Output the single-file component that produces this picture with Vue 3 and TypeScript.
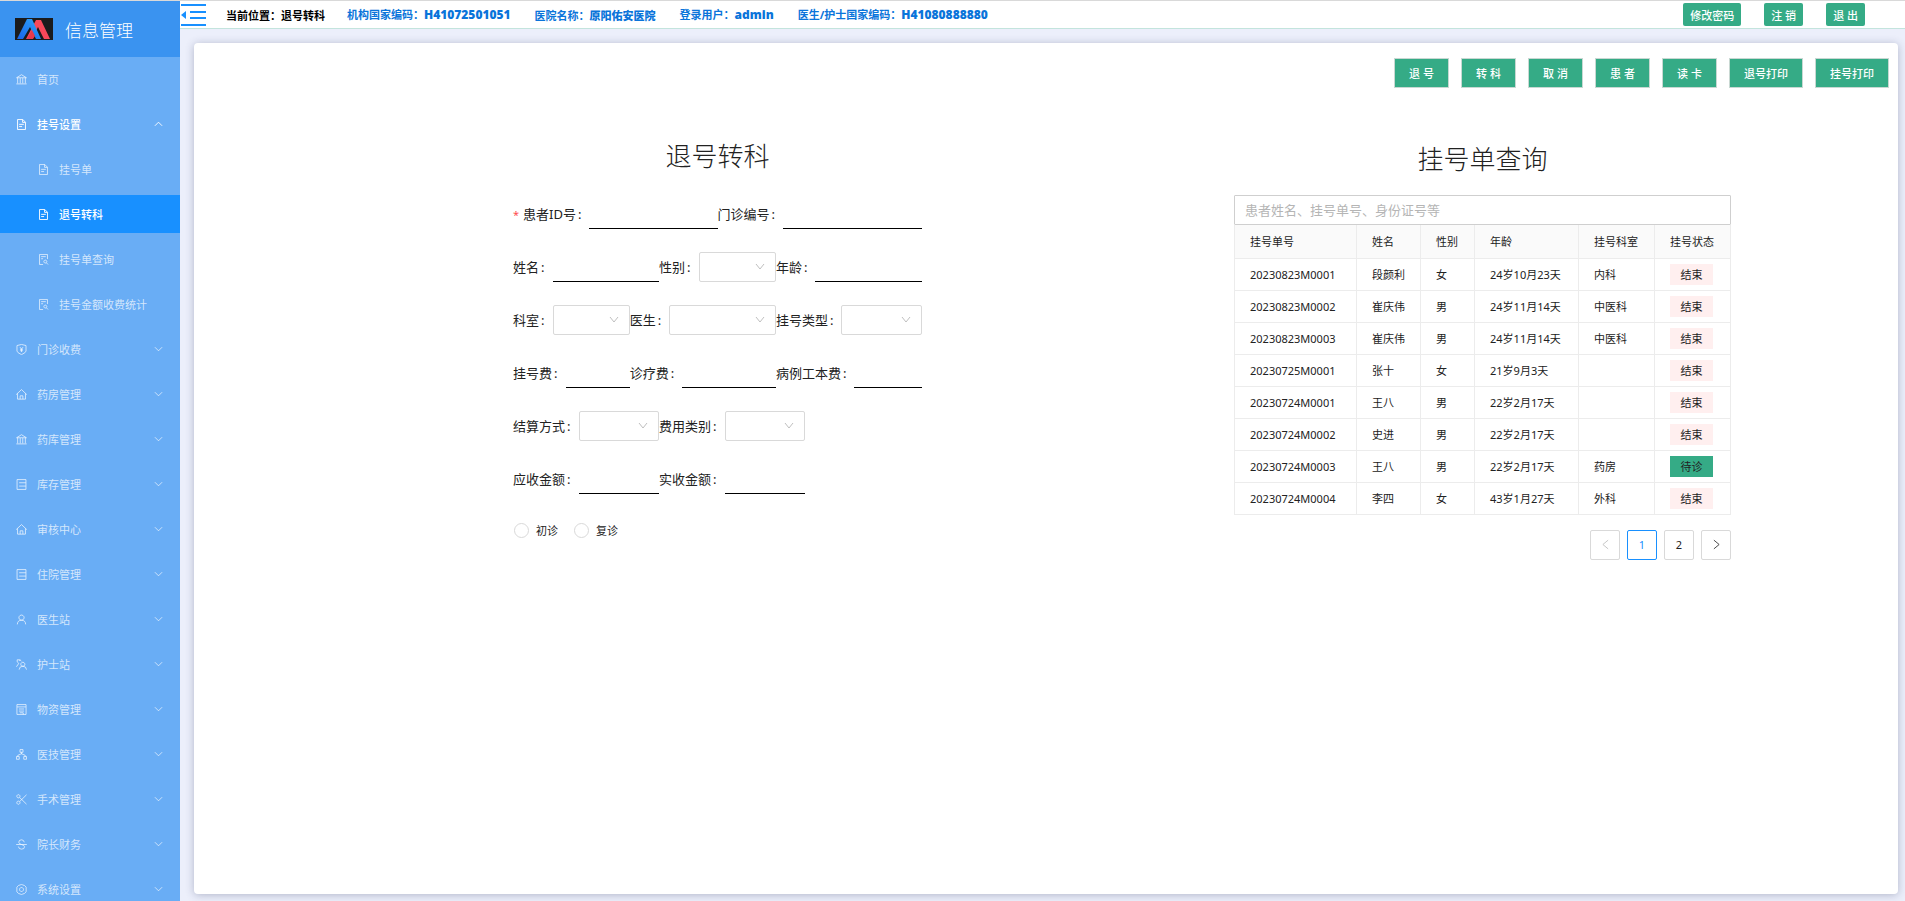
<script setup lang="ts">
import { ref } from 'vue'

interface MenuItem {
  label: string
  icon: string
  kind: 'link' | 'group'
  open?: boolean
  active?: boolean
  sub?: boolean
}

interface Field {
  id: string
  label: string
  span: number
  type: 'input' | 'select'
  required?: boolean
}

interface Registration {
  no: string
  name: string
  sex: string
  age: string
  dept: string
  status: string
}

const icons: Record<string, string> = {
  bank: 'M110 370L512 120L914 370ZM200 380V820M410 400V820M614 400V820M824 380V820M90 870H934',
  file: 'M190 100H610L834 324V924H190ZM600 110V340H824M320 500H700M320 680H560',
  search: 'M834 480V100H190V924H480M320 280H700M320 450H480M660 560a120 120 0 1 0 1 0ZM750 780L880 920',
  shield: 'M512 100L880 190V640Q880 760 512 930Q144 760 144 640V190ZM390 320L512 480L634 320M512 480V720M400 500H624M400 610H624',
  home: 'M80 520L512 110L944 520M190 430V890H834V430M400 890V620H624V890',
  book: 'M150 110H874V914H150ZM320 370H864M320 640H864',
  user: 'M512 150a210 210 0 1 0 1 0ZM172 910Q190 570 512 570Q834 570 852 910',
  nurse: 'M620 330a165 165 0 1 0 1 0ZM320 930Q340 650 620 650Q900 650 920 930M420 130H160V300L290 420L100 700M500 250Q440 120 330 190',
  store: 'M140 110H884V914H140ZM150 300H874M300 470H724M300 640H724M370 780H654V914',
  cluster: 'M390 110H634V330H390ZM100 680H330V900H100ZM694 680H924V900H694ZM512 330V480M210 680V580L512 450L814 580V680',
  scissors: 'M260 120a130 130 0 1 0 1 0ZM260 640a130 130 0 1 0 1 0ZM360 350L920 890M360 680L920 130',
  strike: 'M80 512H944M740 330Q700 130 512 130Q290 130 290 330Q290 450 512 512Q760 570 760 700Q760 890 512 890Q290 890 260 680',
  setting: 'M512 100L620 140L760 190L890 320V700L760 830L620 880L512 924L400 880L260 830L134 700V320L260 190L400 140ZM512 350a162 162 0 1 0 1 0Z'
}

const menu: MenuItem[] = [
  { label: '首页', icon: 'bank', kind: 'link' },
  { label: '挂号设置', icon: 'file', kind: 'group', open: true },
  { label: '挂号单', icon: 'file', kind: 'link', sub: true },
  { label: '退号转科', icon: 'file', kind: 'link', sub: true, active: true },
  { label: '挂号单查询', icon: 'search', kind: 'link', sub: true },
  { label: '挂号金额收费统计', icon: 'search', kind: 'link', sub: true },
  { label: '门诊收费', icon: 'shield', kind: 'group' },
  { label: '药房管理', icon: 'home', kind: 'group' },
  { label: '药库管理', icon: 'bank', kind: 'group' },
  { label: '库存管理', icon: 'book', kind: 'group' },
  { label: '审核中心', icon: 'home', kind: 'group' },
  { label: '住院管理', icon: 'book', kind: 'group' },
  { label: '医生站', icon: 'user', kind: 'group' },
  { label: '护士站', icon: 'nurse', kind: 'group' },
  { label: '物资管理', icon: 'store', kind: 'group' },
  { label: '医技管理', icon: 'cluster', kind: 'group' },
  { label: '手术管理', icon: 'scissors', kind: 'group' },
  { label: '院长财务', icon: 'strike', kind: 'group' },
  { label: '系统设置', icon: 'setting', kind: 'group' }
]

const info = [
  { label: '机构国家编码：', value: 'H41072501051', latin: true },
  { label: '医院名称：', value: '原阳佑安医院', latin: false },
  { label: '登录用户：', value: 'admin', latin: true },
  { label: '医生/护士国家编码：', value: 'H41080888880', latin: true }
]

const session = ['修改密码', '注 销', '退 出']
const actions = ['退 号', '转 科', '取 消', '患 者', '读 卡', '退号打印', '挂号打印']

const rows: Field[][] = [
  [
    { id: 'patient', label: '患者ID号', span: 7, type: 'input', required: true },
    { id: 'clinic', label: '门诊编号', span: 7, type: 'input' }
  ],
  [
    { id: 'name', label: '姓名', span: 5, type: 'input' },
    { id: 'sex', label: '性别', span: 4, type: 'select' },
    { id: 'age', label: '年龄', span: 5, type: 'input' }
  ],
  [
    { id: 'dept', label: '科室', span: 4, type: 'select' },
    { id: 'doctor', label: '医生', span: 5, type: 'select' },
    { id: 'kind', label: '挂号类型', span: 5, type: 'select' }
  ],
  [
    { id: 'fee', label: '挂号费', span: 4, type: 'input' },
    { id: 'treat', label: '诊疗费', span: 5, type: 'input' },
    { id: 'record', label: '病例工本费', span: 5, type: 'input' }
  ],
  [
    { id: 'settle', label: '结算方式', span: 5, type: 'select' },
    { id: 'cost', label: '费用类别', span: 5, type: 'select' }
  ],
  [
    { id: 'due', label: '应收金额', span: 5, type: 'input' },
    { id: 'paid', label: '实收金额', span: 5, type: 'input' }
  ]
]

const columns = ['挂号单号', '姓名', '性别', '年龄', '挂号科室', '挂号状态']

const records: Registration[] = [
  { no: '20230823M0001', name: '段颜利', sex: '女', age: '24岁10月23天', dept: '内科', status: '结束' },
  { no: '20230823M0002', name: '崔庆伟', sex: '男', age: '24岁11月14天', dept: '中医科', status: '结束' },
  { no: '20230823M0003', name: '崔庆伟', sex: '男', age: '24岁11月14天', dept: '中医科', status: '结束' },
  { no: '20230725M0001', name: '张十', sex: '女', age: '21岁9月3天', dept: '', status: '结束' },
  { no: '20230724M0001', name: '王八', sex: '男', age: '22岁2月17天', dept: '', status: '结束' },
  { no: '20230724M0002', name: '史进', sex: '男', age: '22岁2月17天', dept: '', status: '结束' },
  { no: '20230724M0003', name: '王八', sex: '男', age: '22岁2月17天', dept: '药房', status: '待诊' },
  { no: '20230724M0004', name: '李四', sex: '女', age: '43岁1月27天', dept: '外科', status: '结束' }
]

const keyword = ref('')
const visit = ref('')
const page = ref(1)
</script>

<template>
  <div class="app">
    <aside class="sidebar">
      <div class="brand">
        <svg class="logo" viewBox="0 0 38 22" aria-hidden="true">
          <defs>
            <linearGradient id="logo-blue" x1="0" y1="1" x2="1" y2="0">
              <stop offset="0" stop-color="#1763e8" />
              <stop offset="1" stop-color="#2fa6fb" />
            </linearGradient>
          </defs>
          <rect width="38" height="22" fill="#1b1b1c" />
          <path d="M21 2h5l9 19h-6L23 9l-6 12h-6z" fill="#f8485a" />
          <path d="M12 1h5l9 20h-5L15 9 8 21H2z" fill="url(#logo-blue)" />
          <path d="M17 12l3 6-2 3h-6z" fill="#e83a4c" />
        </svg>
        <span>信息管理</span>
      </div>
      <nav class="menu">
        <component
          :is="item.kind === 'link' ? 'a' : 'button'"
          v-for="item in menu"
          :key="item.label"
          :href="item.kind === 'link' ? '#' : undefined"
          :type="item.kind === 'group' ? 'button' : undefined"
          class="item"
          :class="{ sub: item.sub, active: item.active, open: item.open }"
        >
          <svg class="glyph" viewBox="64 64 896 896" aria-hidden="true"><path :d="icons[item.icon]" /></svg>
          <span class="text">{{ item.label }}</span>
          <svg v-if="item.kind === 'group'" class="arrow" viewBox="0 0 10 6" aria-hidden="true">
            <path :d="item.open ? 'M1 5l4-4 4 4' : 'M1 1l4 4 4-4'" />
          </svg>
        </component>
      </nav>
    </aside>

    <div class="main">
      <header class="topbar">
        <button type="button" class="fold" aria-label="收起菜单">
          <svg viewBox="0 0 26 24" aria-hidden="true">
            <path d="M1 2h25M10 9h16M10 15h16M1 22h25" stroke="#1890ff" stroke-width="2" />
            <path d="M1 12l5-4v8z" fill="#1890ff" />
          </svg>
        </button>
        <span class="place">当前位置：退号转科</span>
        <div class="info">
          <span v-for="i in info" :key="i.label">{{ i.label }}<b :class="{ latin: i.latin }">{{ i.value }}</b></span>
        </div>
        <div class="session">
          <button v-for="s in session" :key="s" type="button">{{ s }}</button>
        </div>
      </header>

      <main class="card">
        <div class="actions">
          <button v-for="a in actions" :key="a" type="button">{{ a }}</button>
        </div>

        <div class="panels">
          <form class="form" @submit.prevent>
            <h2>退号转科</h2>
            <div v-for="(row, r) in rows" :key="r" class="row">
              <div v-for="f in row" :key="f.id" class="field" :class="'span-' + f.span">
                <label :for="f.id"><i v-if="f.required">*</i>{{ f.label }}<span>:</span></label>
                <input v-if="f.type === 'input'" :id="f.id" type="text" />
                <div v-else class="select">
                  <select :id="f.id"></select>
                  <svg viewBox="0 0 12 8" aria-hidden="true"><path d="M2 1l4 5 4-5" /></svg>
                </div>
              </div>
            </div>
            <div class="visits">
              <label><input v-model="visit" type="radio" name="visit" value="first" />初诊</label>
              <label><input v-model="visit" type="radio" name="visit" value="again" />复诊</label>
            </div>
          </form>

          <section class="query">
            <h2>挂号单查询</h2>
            <input v-model="keyword" class="search" type="text" aria-label="查询" placeholder="患者姓名、挂号单号、身份证号等" />
            <table>
              <thead>
                <tr>
                  <th v-for="(c, n) in columns" :key="c" :class="'col-' + n">{{ c }}</th>
                </tr>
              </thead>
              <tbody>
                <tr v-for="r in records" :key="r.no">
                  <td>{{ r.no }}</td>
                  <td>{{ r.name }}</td>
                  <td>{{ r.sex }}</td>
                  <td>{{ r.age }}</td>
                  <td>{{ r.dept }}</td>
                  <td><span class="tag" :class="{ waiting: r.status === '待诊' }">{{ r.status }}</span></td>
                </tr>
              </tbody>
            </table>
            <div class="pager">
              <button type="button" class="prev" aria-label="上一页" :disabled="page === 1">
                <svg viewBox="0 0 8 12" aria-hidden="true"><path d="M7 1L1 6l6 5" /></svg>
              </button>
              <button v-for="p in 2" :key="p" type="button" :class="{ current: p === page }" @click="page = p">{{ p }}</button>
              <button type="button" aria-label="下一页" @click="page = 2">
                <svg viewBox="0 0 8 12" aria-hidden="true"><path d="M1 1l6 5-6 5" /></svg>
              </button>
            </div>
          </section>
        </div>
      </main>
    </div>
  </div>
</template>

<style>
body {
  margin: 0;
}
</style>

<style scoped>
.app {
  display: flex;
  box-sizing: border-box;
  height: 100vh;
  overflow: hidden;
  border-top: 1px solid #d9d9d9;
  background: #eceffb;
  color: #222;
  font-family: "Noto Sans", "Noto Sans CJK SC", sans-serif;
  font-size: 11px;
}

.app * {
  box-sizing: border-box;
}

button,
input,
select {
  margin: 0;
  padding: 0;
  border: 0;
  outline: 0;
  background: none;
  color: inherit;
  font: inherit;
}

button {
  cursor: pointer;
}

.sidebar {
  flex: none;
  width: 180px;
  background: #69adf5;
  color: #fff;
}

.brand {
  display: flex;
  align-items: center;
  gap: 12px;
  height: 56px;
  padding-left: 15px;
  background: #3a93f0;
  font-size: 17px;
  font-weight: 300;
}

.logo {
  width: 38px;
  height: 22px;
}

.menu {
  display: flex;
  flex-direction: column;
  gap: 7px;
  padding-top: 3px;
}

.item {
  display: flex;
  align-items: center;
  gap: 10px;
  height: 38px;
  padding: 0 17px 0 16px;
  color: rgba(255, 255, 255, 0.72);
  text-align: left;
  text-decoration: none;
}

.item.sub {
  padding-left: 38px;
}

.item.open,
.item.active {
  color: #fff;
  font-weight: 500;
}

.item.active {
  background: #1890ff;
}

.text {
  flex: 1;
}

.glyph {
  flex: none;
  width: 11px;
  height: 11px;
  fill: none;
  stroke: currentColor;
  stroke-width: 76;
}

.arrow {
  flex: none;
  width: 9px;
  height: 6px;
  fill: none;
  stroke: currentColor;
  stroke-width: 1;
}

.main {
  display: flex;
  flex: 1;
  flex-direction: column;
  min-width: 0;
}

.topbar {
  display: flex;
  align-items: center;
  height: 28px;
  padding-right: 40px;
  border-bottom: 1px solid #c3e4dd;
  background: #fff;
  font-weight: 700;
}

.fold {
  width: 26px;
  height: 24px;
}

.fold svg {
  display: block;
  width: 26px;
  height: 24px;
  fill: none;
}

.place {
  margin: 0 22px 0 20px;
  color: #000;
}

.info {
  display: flex;
  flex: 1;
  align-items: center;
  gap: 24px;
  color: #0a74da;
}

.info .latin {
  font-size: 12px;
}

.session {
  display: flex;
  gap: 23px;
}

.session button {
  height: 23px;
  padding: 0 7px;
  border-radius: 2px;
  background: #35ab86;
  color: #fff;
  font-weight: 500;
}

.card {
  flex: 1;
  margin: 14px 7px 7px 14px;
  padding: 15px 9px;
  border-radius: 4px;
  background: #fff;
  box-shadow: 0 1px 9px rgba(40, 50, 90, 0.3);
}

.actions {
  display: flex;
  justify-content: flex-end;
  gap: 12px;
}

.actions button {
  min-width: 55px;
  height: 30px;
  padding: 0 14px;
  border: 1px solid #c8d8d2;
  background: #35ab86;
  color: #fff;
  font-weight: 500;
}

.panels {
  display: grid;
  grid-template-columns: 310fr 409fr 312fr 497fr 158fr;
  align-items: start;
}

h2 {
  margin: 0;
  font-size: 26px;
  font-weight: 300;
  line-height: 40px;
  text-align: center;
}

.form {
  display: flex;
  grid-column: 2;
  flex-direction: column;
  gap: 23px;
  padding-top: 48px;
  font-size: 13px;
}

.row {
  display: grid;
  grid-template-columns: repeat(14, minmax(0, 1fr));
}

.field {
  display: flex;
  align-items: center;
  height: 30px;
}

.span-4 {
  grid-column: span 4;
}

.span-5 {
  grid-column: span 5;
}

.span-7 {
  grid-column: span 7;
}

.field label {
  flex: none;
  margin-right: 8px;
  padding-bottom: 2px;
}

.field label span {
  margin-left: 2px;
}

.field i {
  margin-right: 4px;
  color: #ff4d4f;
  font-size: 11px;
  font-style: normal;
}

.field > input {
  flex: 1;
  min-width: 0;
  height: 30px;
  border-bottom: 1px solid #000;
}

.select {
  position: relative;
  flex: 1;
  min-width: 0;
}

.select select {
  display: block;
  width: 100%;
  height: 30px;
  border: 1px solid #d9d9d9;
  border-radius: 2px;
  background: #fff;
  appearance: none;
}

.select svg {
  position: absolute;
  top: 11px;
  right: 10px;
  width: 12px;
  height: 8px;
  fill: none;
  stroke: #bfbfbf;
  stroke-width: 1;
  pointer-events: none;
}

.visits {
  display: flex;
  gap: 16px;
  height: 26px;
  padding-left: 1px;
  font-size: 11px;
}

.visits label {
  display: flex;
  align-items: center;
  gap: 7px;
}

.visits input {
  width: 15px;
  height: 15px;
  border: 1px solid #d9d9d9;
  border-radius: 50%;
  background: #fff;
  appearance: none;
}

.visits input:checked {
  border: 4px solid #1890ff;
}

.query {
  grid-column: 4;
  padding-top: 51px;
}

.search {
  display: block;
  width: 100%;
  height: 30px;
  margin-top: 16px;
  padding: 0 10px;
  border: 1px solid #cfcfcf;
  border-radius: 1px;
  font-size: 13px;
}

.search::placeholder {
  color: #b5b5b5;
  opacity: 1;
}

table {
  width: 100%;
  border-collapse: collapse;
  table-layout: fixed;
}

th,
td {
  height: 32px;
  padding: 0 15px;
  border: 1px solid #ececec;
  font-weight: 400;
  text-align: left;
  white-space: nowrap;
}

th {
  height: 33px;
  border-top: 0;
  background: #fafafa;
}

.col-0 {
  width: 122px;
}

.col-1 {
  width: 64px;
}

.col-2 {
  width: 54px;
}

.col-3 {
  width: 104px;
}

.tag {
  display: block;
  width: 43px;
  height: 21px;
  background: #ffefef;
  line-height: 21px;
  text-align: center;
}

.tag.waiting {
  background: #35ab86;
}

.pager {
  display: flex;
  justify-content: flex-end;
  gap: 7px;
  margin-top: 15px;
}

.pager button {
  display: flex;
  align-items: center;
  justify-content: center;
  width: 30px;
  height: 30px;
  border: 1px solid #d9d9d9;
  border-radius: 2px;
}

.pager .current {
  border-color: #1890ff;
  color: #1890ff;
}

.pager svg {
  width: 7px;
  height: 11px;
  fill: none;
  stroke: #333;
  stroke-width: 1;
}

.pager .prev svg {
  stroke: #bfbfbf;
}
</style>
